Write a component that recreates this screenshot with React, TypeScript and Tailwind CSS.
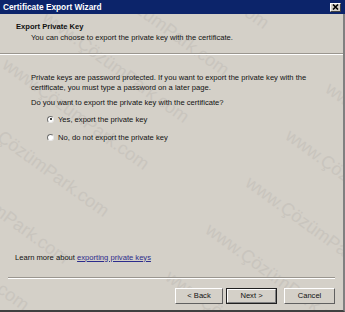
export default function App() {
  const font = { fontFamily: '"Liberation Sans", Arial, sans-serif' };

  return (
    <div
      className="relative w-[345px] h-[312px] overflow-hidden bg-[#d4d0c8] text-[7.6px] leading-[9.5px] text-[#111] flex flex-col"
      style={font}
    >
      {/* watermark */}
      <div className="absolute inset-0 pointer-events-none text-[18px] leading-[18px] text-[#c9c5be] whitespace-nowrap">
        <span className="absolute left-[130px] top-[-86px] rotate-[36deg] origin-top-left">www.ÇözümPark.com</span>
        <span className="absolute left-[90px] top-[-39px] rotate-[36deg] origin-top-left">www.ÇözümPark.com</span>
        <span className="absolute left-[50px] top-[8px] rotate-[36deg] origin-top-left">www.ÇözümPark.com</span>
        <span className="absolute left-[10px] top-[55px] rotate-[36deg] origin-top-left">www.ÇözümPark.com</span>
        <span className="absolute left-[-30px] top-[102px] rotate-[36deg] origin-top-left">www.ÇözümPark.com</span>
        <span className="absolute left-[-70px] top-[149px] rotate-[36deg] origin-top-left">www.ÇözümPark.com</span>
        <span className="absolute left-[-110px] top-[196px] rotate-[36deg] origin-top-left">www.ÇözümPark.com</span>
        <span className="absolute left-[333px] top-[79px] rotate-[36deg] origin-top-left">www.ÇözümPark.com</span>
        <span className="absolute left-[293px] top-[126px] rotate-[36deg] origin-top-left">www.ÇözümPark.com</span>
        <span className="absolute left-[253px] top-[173px] rotate-[36deg] origin-top-left">www.ÇözümPark.com</span>
        <span className="absolute left-[213px] top-[220px] rotate-[36deg] origin-top-left">www.ÇözümPark.com</span>
        <span className="absolute left-[173px] top-[267px] rotate-[36deg] origin-top-left">www.ÇözümPark.com</span>
      </div>

      {/* title bar */}
      <div className="relative z-10 h-[14px] shrink-0 bg-[#0c246a] flex items-center justify-between pl-[3px] pr-[4px]">
        <span className="text-white font-bold text-[8.3px] leading-[12px]">Certificate Export Wizard</span>
        <button className="w-[11px] h-[9px] bg-[#d4d0c8] border-t border-l border-white border-r border-b border-r-[#404040] border-b-[#404040] flex items-center justify-center">
          <svg width="7" height="6" viewBox="0 0 7 6">
            <path d="M1 0.5 L6 5.5 M6 0.5 L1 5.5" stroke="#000" strokeWidth="1.6" />
          </svg>
        </button>
      </div>

      <div className="relative flex-1 flex flex-col border-r-2 border-b-2 border-r-[#808080] border-b-[#404040]">
        {/* header */}
        <div className="h-[39px] shrink-0 pl-[16px] pt-[8px]">
          <div className="font-bold">Export Private Key</div>
          <div className="pl-[15px] mt-[1px]">You can choose to export the private key with the certificate.</div>
        </div>
        <div className="h-[2px] border-t border-b border-t-[#9a968f] border-b-white" />

        {/* body */}
        <div className="flex-1 flex flex-col pl-[31px] pt-[18px]">
          <p>
            Private keys are password protected. If you want to export the private key with the
            <br />
            certificate, you must type a password on a later page.
          </p>
          <p className="mt-[6px]">Do you want to export the private key with the certificate?</p>

          <div className="pl-[16px] mt-[7px] flex flex-col gap-[8.5px]">
            <label className="flex items-center gap-[4px]">
              <span className="w-[7px] h-[7px] rounded-full bg-white border border-t-[#707070] border-l-[#707070] border-r-[#e8e8e8] border-b-[#e8e8e8] flex items-center justify-center">
                <span className="w-[2px] h-[2px] rounded-full bg-black" />
              </span>
              Yes, export the private key
            </label>
            <label className="flex items-center gap-[4px]">
              <span className="w-[7px] h-[7px] rounded-full bg-white border border-t-[#707070] border-l-[#707070] border-r-[#e8e8e8] border-b-[#e8e8e8]" />
              No, do not export the private key
            </label>
          </div>

          <div className="flex-1" />
          <p className="ml-[-16px] mb-[15px]">
            Learn more about{' '}
            <a className="text-[#2c2c8c] underline">exporting private keys</a>
          </p>
        </div>

        {/* footer */}
        <div className="mx-[8px] h-[2px] border-t border-b border-t-[#9a968f] border-b-white" />
        <div className="h-[31px] shrink-0 flex items-start justify-end gap-[3px] pr-[8px] pt-[9px]">
          <button className="w-[48px] h-[16px] bg-[#d4d0c8] border border-t-white border-l-white border-r-[#606060] border-b-[#606060] text-[7.6px]">
            &lt; Back
          </button>
          <button className="w-[51px] h-[16px] bg-[#d4d0c8] border border-[#202020] text-[7.6px] mr-[4px]">
            <span className="block h-full border border-t-white border-l-white border-r-[#808080] border-b-[#808080] leading-[12px]">
              Next &gt;
            </span>
          </button>
          <button className="w-[51px] h-[16px] bg-[#d4d0c8] border border-t-white border-l-white border-r-[#606060] border-b-[#606060] text-[7.6px]">
            Cancel
          </button>
        </div>
      </div>
    </div>
  );
}
